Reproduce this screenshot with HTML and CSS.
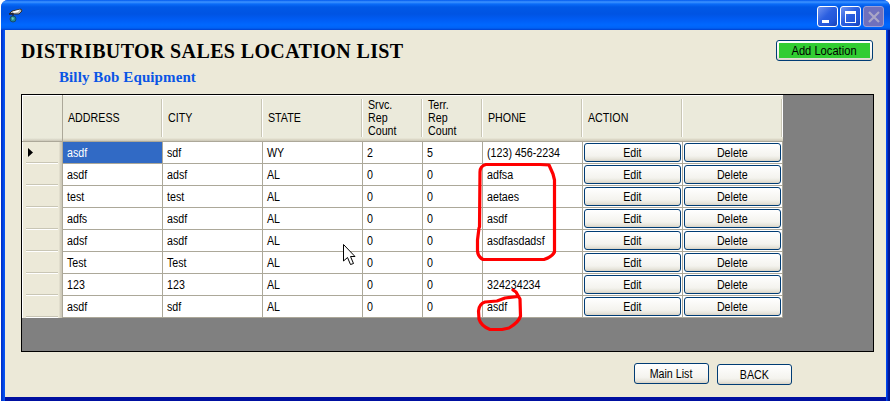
FILE: index.html
```html
<!DOCTYPE html>
<html lang="en">
<head>
<meta charset="utf-8">
<title>Distributor Sales Location List</title>
<link rel="stylesheet" href="styles.css">
</head>
<body>
<div class="window">
  <header class="titlebar">
    <svg class="app-icon" width="16" height="16" viewBox="0 0 16 16">
      <path d="M1 6 L4 3 L13 1 L14 3 L11 6 L5 6Z" fill="#b9b9b5" stroke="#333" stroke-width="1"/>
      <path d="M5 3.5 L12 1.5 L10 4 L5 5Z" fill="#fff"/>
      <path d="M1 6 L5 5.5 L5 8" fill="none" stroke="#223" stroke-width="1.4"/>
      <circle cx="5" cy="11" r="3" fill="#238996" stroke="#174b68"/>
      <path d="M3.500 10L5 9L6 11L4.500 12Z" fill="#75cbb3"/>
    </svg>
    <div class="controls">
      <span class="ctl"><svg width="19" height="19"><rect x="4" y="13" width="7" height="3" fill="#fff"/></svg></span>
      <span class="ctl"><svg width="19" height="19"><path d="M4 4h11v12H4z M5 7v8h9V7z" fill="#fff" fill-rule="evenodd"/></svg></span>
      <span class="ctl ctl-off"><svg width="19" height="19"><path d="M5 5L15 15M15 5L5 15" stroke="#aaa6c6" stroke-width="2.2"/></svg></span>
    </div>
  </header>
  <main class="client">
    <div class="heading">
      <div>
        <h1>DISTRIBUTOR SALES LOCATION LIST</h1>
        <h2>Billy Bob Equipment</h2>
      </div>
      <button class="btn add"><span class="fill"><span class="t">Add Location</span></span></button>
    </div>
    <section class="grid-box">
      <div class="row head">
        <div class="rh"></div>
        <div><span class="t">ADDRESS</span></div><div><span class="t">CITY</span></div><div><span class="t">STATE</span></div>
        <div><span class="t">Srvc.<br>Rep<br>Count</span></div><div><span class="t">Terr.<br>Rep<br>Count</span></div>
        <div><span class="t">PHONE</span></div><div><span class="t">ACTION</span></div><div></div>
      </div>
      <div class="row"><div class="rh"><svg width="5" height="9"><path d="M0 0L5 4.5L0 9Z"/></svg></div><div class="sel"><span class="t">asdf</span></div><div><span class="t">sdf</span></div><div><span class="t">WY</span></div><div><span class="t">2</span></div><div><span class="t">5</span></div><div><span class="t">(123) 456-2234</span></div><div class="act"><button class="btn"><span class="t">Edit</span></button></div><div class="act"><button class="btn"><span class="t">Delete</span></button></div></div>
      <div class="row"><div class="rh"></div><div><span class="t">asdf</span></div><div><span class="t">adsf</span></div><div><span class="t">AL</span></div><div><span class="t">0</span></div><div><span class="t">0</span></div><div><span class="t">adfsa</span></div><div class="act"><button class="btn"><span class="t">Edit</span></button></div><div class="act"><button class="btn"><span class="t">Delete</span></button></div></div>
      <div class="row"><div class="rh"></div><div><span class="t">test</span></div><div><span class="t">test</span></div><div><span class="t">AL</span></div><div><span class="t">0</span></div><div><span class="t">0</span></div><div><span class="t">aetaes</span></div><div class="act"><button class="btn"><span class="t">Edit</span></button></div><div class="act"><button class="btn"><span class="t">Delete</span></button></div></div>
      <div class="row"><div class="rh"></div><div><span class="t">adfs</span></div><div><span class="t">asdf</span></div><div><span class="t">AL</span></div><div><span class="t">0</span></div><div><span class="t">0</span></div><div><span class="t">asdf</span></div><div class="act"><button class="btn"><span class="t">Edit</span></button></div><div class="act"><button class="btn"><span class="t">Delete</span></button></div></div>
      <div class="row"><div class="rh"></div><div><span class="t">adsf</span></div><div><span class="t">asdf</span></div><div><span class="t">AL</span></div><div><span class="t">0</span></div><div><span class="t">0</span></div><div><span class="t">asdfasdadsf</span></div><div class="act"><button class="btn"><span class="t">Edit</span></button></div><div class="act"><button class="btn"><span class="t">Delete</span></button></div></div>
      <div class="row"><div class="rh"></div><div><span class="t">Test</span></div><div><span class="t">Test</span></div><div><span class="t">AL</span></div><div><span class="t">0</span></div><div><span class="t">0</span></div><div></div><div class="act"><button class="btn"><span class="t">Edit</span></button></div><div class="act"><button class="btn"><span class="t">Delete</span></button></div></div>
      <div class="row"><div class="rh"></div><div><span class="t">123</span></div><div><span class="t">123</span></div><div><span class="t">AL</span></div><div><span class="t">0</span></div><div><span class="t">0</span></div><div><span class="t">324234234</span></div><div class="act"><button class="btn"><span class="t">Edit</span></button></div><div class="act"><button class="btn"><span class="t">Delete</span></button></div></div>
      <div class="row"><div class="rh"></div><div><span class="t">asdf</span></div><div><span class="t">sdf</span></div><div><span class="t">AL</span></div><div><span class="t">0</span></div><div><span class="t">0</span></div><div><span class="t">asdf</span></div><div class="act"><button class="btn"><span class="t">Edit</span></button></div><div class="act"><button class="btn"><span class="t">Delete</span></button></div></div>
    </section>
    <footer class="footer">
      <button class="btn"><span class="t">Main List</span></button>
      <button class="btn back"><span class="t">BACK</span></button>
    </footer>
  </main>
</div>
<svg class="overlay" width="891" height="402" viewBox="0 0 891 402">
  <g fill="none" stroke="#f00" stroke-width="3.2" stroke-linejoin="round" stroke-linecap="round">
    <path d="M479.500 227L480 172Q480 166 486 164.500L540 164.500L549 165L553 174L554.500 180V252Q552 257 544 259.500H483Q478 257 477.500 251V240L479 228"/>
    <path d="M513 290L516 292L520 299L520.500 316Q519 322 509 328L502 329.500H490Q481 326 479 319L478.500 311Q479 304 485 302L497 301L505 298L518 296.500"/>
  </g>
  <path d="M343.500 244.500V261L347.500 257.500L350.500 264.500L353.500 263.500L350.500 256.500H355Z" fill="#fff" stroke="#000"/>
</svg>
</body>
</html>
```
FILE: styles.css
```css
* { box-sizing: border-box; }
body {
  margin: 0;
  width: 891px;
  height: 402px;
  overflow: hidden;
  background: #fff;
  font: 12px/13px "Liberation Sans", Arial, sans-serif;
  color: #000;
}
.window {
  display: flex;
  flex-direction: column;
  width: 889px;
  height: 401px;
  margin-left: 1px;
  border-radius: 7px 7px 0 0;
  overflow: hidden;
  background: linear-gradient(90deg, #0030c8 0, #0030c8 1px, #0046e6 2px, #0855f5 4px, #0046f0 885px, #0046f0 886px, #001da0 887px, #00138c 889px);
}
.titlebar {
  display: flex;
  justify-content: space-between;
  height: 30px;
  padding: 6px 6px 0 7px;
  background: linear-gradient(#0058ee 0, #3f94ff 2px, #0a6cf8 4px, #0058e6 7px, #0054e3 14px, #005df5 20px, #0068ff 25px, #0062f5 28px, #0040cf 30px);
}
.app-icon { margin-top: 2px; }
.controls { display: flex; gap: 2px; }
.ctl {
  display: flex;
  width: 21px;
  height: 21px;
  border: 1px solid #fff;
  border-radius: 3px;
  background: linear-gradient(135deg, #7093f0, #2b5fe0 45%, #2255d8 75%, #1841b4);
}
.ctl-off { border-color: #9c9fd6; background: #6f70bd; }
.client {
  display: flex;
  flex-direction: column;
  flex: 1;
  margin: 0 4px 0;
  padding: 0 12px 0 16px;
  border-bottom: 4px solid #0019a8;
  border-image: linear-gradient(#0046f0 35%, #0010a0 70%) 4;
  border-image-width: 0 0 4px 0;
  background: #ece9d8;
}
.heading { display: flex; justify-content: space-between; height: 64px; }
h1, h2 {
  margin: 0;
  font-family: "Liberation Serif", "Times New Roman", serif;
  font-weight: bold;
  white-space: nowrap;
}
h1 { padding-top: 9px; font-size: 20px; line-height: 24px; letter-spacing: .37px; }
h2 { padding: 5px 0 0 38px; font-size: 15px; line-height: 18px; letter-spacing: .1px; color: #0a55e5; }
.t { display: inline-block; transform: translateY(1px) scaleX(.89); transform-origin: left; white-space: nowrap; }
.btn {
  display: flex;
  align-items: center;
  justify-content: center;
  margin: 0;
  padding: 0;
  border: 1px solid #003c74;
  border-radius: 3px;
  background: linear-gradient(#fff, #f4f3ee 70%, #e7e5dc 88%, #d8d2c5);
  font: inherit;
  color: #000;
}
.btn .t { transform-origin: center; }
.add { width: 97px; height: 21px; margin: 10px 1px 0 0; padding: 2px; }
.fill { display: flex; align-items: center; justify-content: center; width: 100%; height: 100%; background: #32cd32; }
.add .t { transform: translateY(1px) scaleX(.93); }
.grid-box { height: 258px; border: 1px solid #000; background: #808080; }
.row {
  display: grid;
  grid-template-columns: 41px repeat(3, 100px) repeat(2, 60px) repeat(3, 100px);
  width: 761px;
  height: 22px;
}
.row > div {
  display: flex;
  align-items: center;
  padding: 0 0 0 4px;
  border-right: 1px solid #aca899;
  border-bottom: 1px solid #aca899;
  background: #fff;
}
.row > .rh {
  padding: 0 0 2px 6px;
  border-right-color: #aca899;
  border-bottom: 0;
  background:
    linear-gradient(#fff, #fff) 4px 100% / 32px 1px no-repeat,
    linear-gradient(#c9c6b5, #c9c6b5) 4px calc(100% - 1px) / 32px 1px no-repeat,
    linear-gradient(90deg, #fff 1px, #ece9d8 1px, #ece9d8 37px, #d6d2c2 38px, #cbc7b8 40px);
}
.row.head { height: 47px; }
.row.head > div {
  padding: 0 0 1px 5px;
  border-right: 0;
  background:
    linear-gradient(#fff, #fff) 100% 4px / 1px 38px no-repeat,
    linear-gradient(#c9c6b5, #c9c6b5) calc(100% - 1px) 4px / 1px 38px no-repeat,
    linear-gradient(#fff 0, #fff 1px, #ebeadb 1px, #ebeadb 43px, #e0dccb 44px, #cbc7b8 46px);
}
.row.head > .rh {
  border-right: 1px solid #aca899;
  border-bottom: 1px solid #aca899;
  background: linear-gradient(90deg, #fff 1px, transparent 1px), linear-gradient(#fff 1px, #ebeadb 1px, #ebeadb 43px, #cbc7b8 46px);
}
.row > .sel { background: #316ac5; color: #fff; }
.row > .act { padding: 1px; }
.act .btn { width: 98px; height: 19px; }
.footer { display: flex; gap: 8px; padding: 11px 0 0 613px; }
.footer .btn { width: 75px; height: 21px; }
.footer .back { margin-top: 1px; }
.overlay { position: absolute; left: 0; top: 0; pointer-events: none; }
```
